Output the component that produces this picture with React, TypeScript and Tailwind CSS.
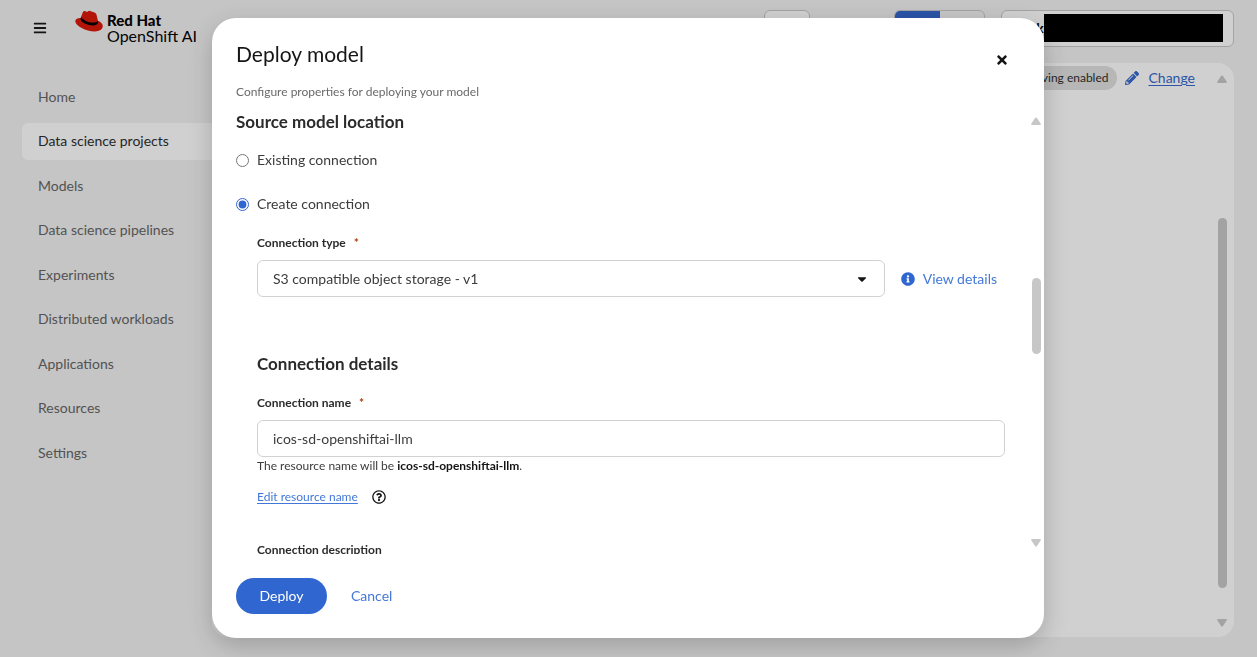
import React, { useState } from "react";
import {
  FaBars,
  FaCaretDown,
  FaInfoCircle,
  FaPencilAlt,
  FaRegQuestionCircle,
  FaTimes,
} from "react-icons/fa";

const navItems = [
  "Home",
  "Data science projects",
  "Models",
  "Data science pipelines",
  "Experiments",
  "Distributed workloads",
  "Applications",
  "Resources",
  "Settings",
];

function HatLogo() {
  return (
    <svg viewBox="0 0 197 149" className="h-[22px] w-7 shrink-0" aria-hidden="true">
      <path
        fill="#db1505"
        d="M129,85c12.51,0,30.61-2.58,30.61-17.46a14,14,0,0,0-.31-3.42l-7.45-32.36c-1.72-7.12-3.23-10.35-15.73-16.6C126.39,10.19,105.24,2,99,2c-5.82,0-7.55,7.54-14.45,7.54-6.68,0-11.64-5.6-17.89-5.6-6,0-9.91,4.09-12.93,12.5,0,0-8.41,23.72-9.49,27.16L40.6,52.7C24.07,53.57,2,56.55,2,76.08,2,108.07,77.63,147.5,137.65,147.5c46,0,57.62-20.81,57.62-37.23,0-12.92-11.21-27.57-33.49-36.65Z"
      />
      <path
        fill="#000"
        d="M161.53,73.59c1.73,8.19,1.73,9.05,1.73,10.13,0,14-15.74,21.77-36.43,21.77C80.07,105.49,39.12,78.12,39.12,60a18.45,18.45,0,0,1,1.51-7.33l3.66-9.06A6.43,6.43,0,0,0,44,45.5C44,54.72,80.3,85,129,85c12.51,0,30.61-2.58,30.61-17.46a14,14,0,0,0-.31-3.42Z"
      />
    </svg>
  );
}

function Arrow({ down }: { down?: boolean }) {
  return (
    <svg viewBox="0 0 10 8" className="h-2 w-[10px] shrink-0 fill-current">
      {down ? (
        <path d="M1.2 0h7.6q1.6.2.8 1.6L6 7q-1 1.2-2 0L.4 1.6Q-.4.2 1.2 0Z" />
      ) : (
        <path d="M1.2 8h7.6q1.6-.2.8-1.6L6 1Q5-.2 4 1L.4 6.4Q-.4 7.8 1.2 8Z" />
      )}
    </svg>
  );
}

function Header() {
  return (
    <header className="flex h-[63px] items-start pr-[23px] pt-[10px]">
      <button aria-label="Global navigation" className="ml-[33px] mt-[11px] text-[#151515]">
        <FaBars size={14} />
      </button>
      <div className="ml-7 flex gap-1">
        <HatLogo />
        <div className="mt-[2px] text-base leading-4 text-black">
          <div className="text-[15px] leading-4 font-black">Red Hat</div>
          <div>OpenShift AI</div>
        </div>
      </div>
      <div className="ml-auto flex">
        <button
          aria-label="Applications"
          className="h-[37px] w-[46px] rounded-md border border-[#c7c7c7] bg-white"
        />
        <div className="ml-[84px] flex h-[37px] w-[91px] overflow-hidden rounded-md border border-[#c7c7c7]">
          <button aria-label="Light theme" className="flex-1 bg-[#3366cc]" />
          <button aria-label="Dark theme" className="flex-1" />
        </div>
        <button className="ml-4 flex h-[37px] w-[233px] items-start rounded-md border border-[#c7c7c7] bg-white pl-[34px] pr-[10px] pt-[3px]">
          <span className="w-2 text-sm leading-7 font-bold">k</span>
          <span className="relative z-20 h-7 flex-1 bg-black" />
        </button>
      </div>
    </header>
  );
}

function Sidebar() {
  return (
    <nav className="w-[212px] shrink-0 pl-[22px] pt-[15px]">
      <ul className="flex h-[393px] flex-col justify-between">
        {navItems.map((item) => (
          <li key={item}>
            <a
              href="#"
              className={
                item === "Data science projects"
                  ? "flex h-[37px] items-center rounded-l-md bg-white pl-4 text-sm text-[#2b2b2b]"
                  : "flex h-[37px] items-center pl-4 text-sm text-[#636363]"
              }
            >
              {item}
            </a>
          </li>
        ))}
      </ul>
    </nav>
  );
}

function ProjectPage() {
  return (
    <main className="mb-5 mr-[23px] flex flex-1 justify-end rounded-2xl bg-white">
      <div className="flex h-[27px] items-center pt-[3px]">
        <span className="flex h-6 items-center rounded-full bg-[#e0e0e0] px-2 text-xs text-[#2b2b2b]">
          Single-model serving enabled
        </span>
        <a href="#" className="ml-2 flex items-center gap-[10px] text-sm text-[#3366cc]">
          <FaPencilAlt size={14} />
          <span className="underline underline-offset-2">Change</span>
        </a>
      </div>
      <div className="ml-[22px] mr-[7px] flex flex-col items-center pb-[10px] pt-3 text-[#c7c7c7]">
        <Arrow />
        <div className="w-[9px] flex-1 pb-[31px] pt-[135px]">
          <div className="h-full rounded-full bg-current" />
        </div>
        <Arrow down />
      </div>
    </main>
  );
}

const labelClass = "text-xs font-bold leading-4 text-[#2b2b2b]";

function DeployModal() {
  const [source, setSource] = useState("create");
  const [name, setName] = useState("icos-sd-openshiftai-llm");

  return (
    <div className="fixed inset-0 z-10 flex justify-center bg-[#151515]/20 pb-[19px] pr-px pt-[18px]">
      <div
        role="dialog"
        aria-labelledby="modal-title"
        className="flex w-full max-w-[832px] flex-col rounded-3xl bg-white shadow-[0_8px_24px_rgba(0,0,0,0.2)]"
      >
        <div className="flex h-[91px] shrink-0 justify-between pl-6 pr-[35px] pt-[23px]">
          <div>
            <h1 id="modal-title" className="text-[21px] leading-[26px] text-[#151515]">
              Deploy model
            </h1>
            <p className="mt-4 text-xs leading-[18px] text-[#6a6a6a]">
              Configure properties for deploying your model
            </p>
          </div>
          <button aria-label="Close" className="mt-3 h-3 text-[#151515]">
            <FaTimes size={14} />
          </button>
        </div>

        <div className="flex min-h-0 flex-1">
          <form className="h-full flex-1 overflow-hidden pl-6 text-sm text-[#3c3c3c]">
            <h2 className="mt-[3px] text-[17px] font-bold leading-5 text-[#2b2b2b]">
              Source model location
            </h2>
            <label className="mt-[18px] flex h-5 items-center gap-2">
              <input
                type="radio"
                name="source"
                className="h-[13px] w-[13px] accent-[#2f66cf]"
                checked={source === "existing"}
                onChange={() => setSource("existing")}
              />
              Existing connection
            </label>
            <label className="mt-6 flex h-5 items-center gap-2">
              <input
                type="radio"
                name="source"
                className="h-[13px] w-[13px] accent-[#2f66cf]"
                checked={source === "create"}
                onChange={() => setSource("create")}
              />
              Create connection
            </label>

            <div className="pl-[21px]">
              <label htmlFor="type" className={`${labelClass} mt-[21px] flex gap-2`}>
                Connection type <span className="text-[#b1380b]">*</span>
              </label>
              <div className="mt-[9px] flex items-center pr-2">
                <div className="relative flex-1">
                  <select
                    id="type"
                    className="block h-[37px] w-full appearance-none rounded-md border border-[#d2d2d2] bg-white px-[15px]"
                  >
                    <option>S3 compatible object storage - v1</option>
                  </select>
                  <FaCaretDown
                    size={14}
                    className="pointer-events-none absolute right-4 top-3 text-[#151515]"
                  />
                </div>
                <button type="button" className="ml-4 flex items-center gap-2 text-[#4378d8]">
                  <FaInfoCircle size={14} className="text-[#2f66cf]" />
                  View details
                </button>
              </div>

              <h3 className="mt-14 text-[17px] font-bold leading-[22px] text-[#2b2b2b]">
                Connection details
              </h3>
              <label htmlFor="name" className={`${labelClass} mt-5 flex gap-2`}>
                Connection name <span className="text-[#b1380b]">*</span>
              </label>
              <input
                id="name"
                value={name}
                onChange={(e) => setName(e.target.value)}
                className="mt-[9px] block h-[37px] w-full rounded-md border border-[#d2d2d2] px-[15px]"
              />
              <p className="text-xs leading-[18px]">
                The resource name will be <b className="text-[#151515]">{name}</b>.
              </p>
              <div className="mt-[13px] flex h-[18px] items-center gap-[14px] text-xs">
                <a href="#" className="text-[#4378d8] underline underline-offset-2">
                  Edit resource name
                </a>
                <button type="button" aria-label="Help" className="text-[#151515]">
                  <FaRegQuestionCircle size={14} />
                </button>
              </div>
              <label htmlFor="description" className={`${labelClass} mt-9 block`}>
                Connection description
              </label>
              <textarea id="description" className="mt-2 block w-full rounded-md border" />
            </div>
          </form>
          <div className="ml-[26px] mr-[3px] flex w-[10px] flex-col items-center pb-[7px] pt-2 text-[#c7c7c7]">
            <Arrow />
            <div className="w-[9px] flex-1 pt-[153px]">
              <div className="h-[76px] rounded-full bg-current" />
            </div>
            <Arrow down />
          </div>
        </div>

        <div className="flex h-[84px] shrink-0 items-start gap-6 pl-6 pt-6 text-sm">
          <button className="h-9 w-[91px] rounded-full bg-[#2f66cf] text-white">Deploy</button>
          <button className="h-9 text-[#4378d8]">Cancel</button>
        </div>
      </div>
    </div>
  );
}

export default function App() {
  return (
    <div className="flex min-h-screen flex-col bg-[#f2f2f2] font-['Lato',sans-serif]">
      <Header />
      <div className="flex flex-1">
        <Sidebar />
        <ProjectPage />
      </div>
      <DeployModal />
    </div>
  );
}
